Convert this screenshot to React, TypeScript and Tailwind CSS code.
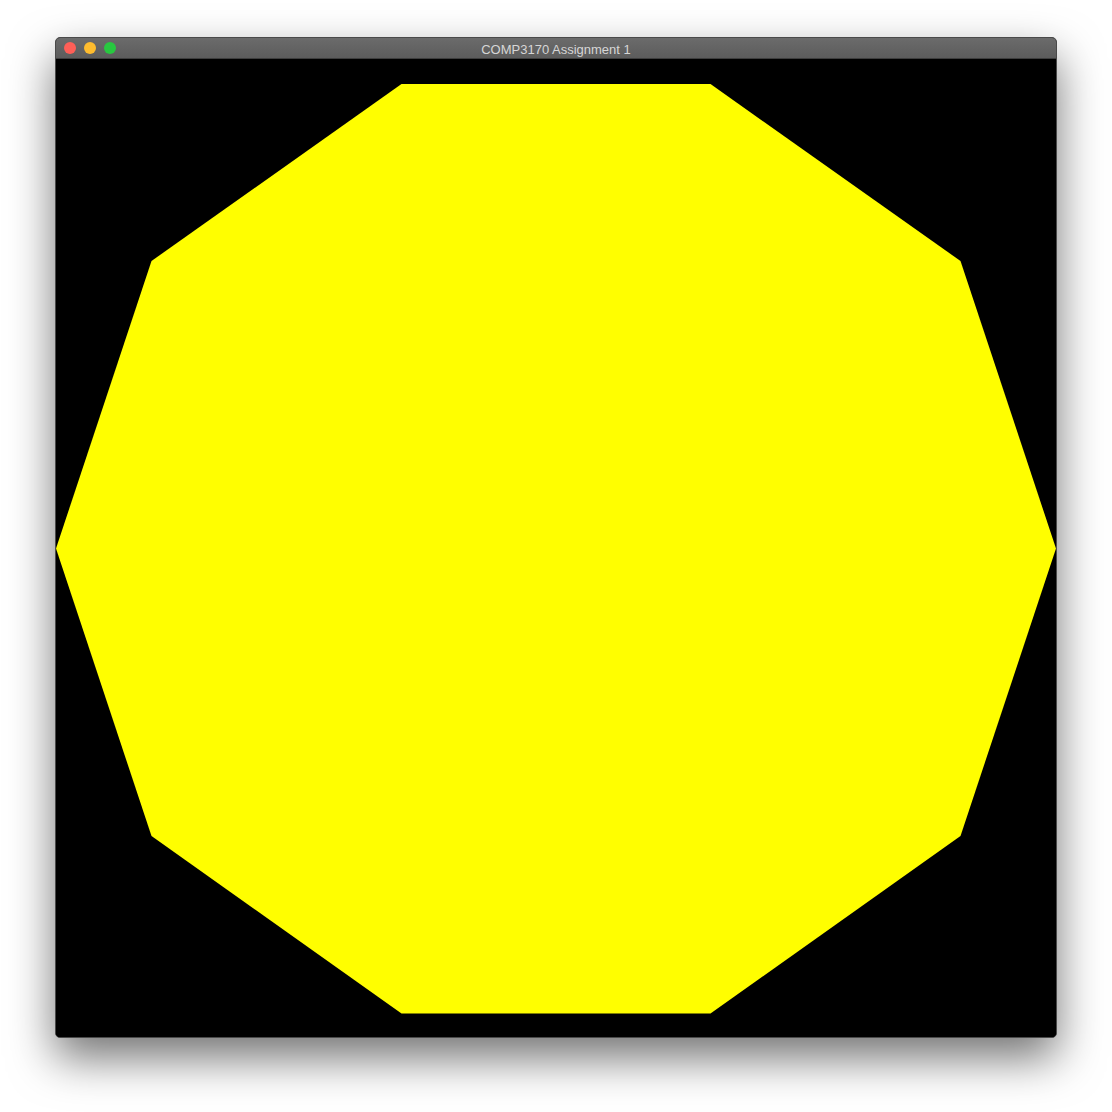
import React from 'react';

export default function App() {
  return (
    <div className="w-[1112px] h-[1112px] bg-white pt-[37px] pl-[55px]">
      <div className="w-[1002px] rounded-[5px] border border-[#4a4a4a] overflow-hidden bg-black shadow-[0_20px_45px_rgba(0,0,0,0.55)]">
        <div className="relative h-[21px] flex items-center justify-center pt-[2px] bg-gradient-to-b from-[#6b6b6b] to-[#5c5c5c] border-b border-[#3d3d3d]">
          <div className="absolute left-[8px] top-[4px] flex gap-[8px]">
            <span className="w-[12px] h-[12px] rounded-full bg-[#fe5f57]" />
            <span className="w-[12px] h-[12px] rounded-full bg-[#febc2e]" />
            <span className="w-[12px] h-[12px] rounded-full bg-[#28c840]" />
          </div>
          <span className="text-[13px] leading-none text-[#d6d6d6] font-['Helvetica','Liberation_Sans',sans-serif]">
            COMP3170 Assignment 1
          </span>
        </div>
        <div className="h-[978px] w-[1000px] bg-black">
          <svg width="1000" height="978" viewBox="0 0 1000 978" className="block">
            <polygon
              fill="#fffe00"
              points="1000,489.5 904.5,202 654.5,25 345.5,25 95.5,202 0,489.5 95.5,777 345.5,954.5 654.5,954.5 904.5,777"
            />
          </svg>
        </div>
      </div>
    </div>
  );
}
